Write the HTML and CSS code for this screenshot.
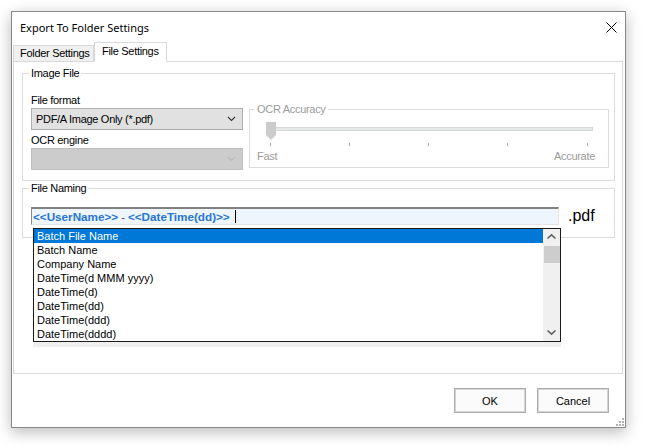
FILE: index.html
```html
<!DOCTYPE html>
<html>
<head>
<meta charset="utf-8">
<link rel="stylesheet" href="styles.css">
</head>
<body>
<div class="window">
  <div class="titlebar">
    <span class="title">Export To Folder Settings</span>
    <svg class="close" width="11" height="11" viewBox="0 0 11 11"><path d="M0.5 0.5 L10.5 10.5 M10.5 0.5 L0.5 10.5" stroke="#000" stroke-width="1" fill="none"/></svg>
  </div>
  <div class="tabs">
    <div class="tab">Folder Settings</div>
    <div class="tab active">File Settings</div>
  </div>
  <div class="panel">
    <fieldset class="group image-group">
      <legend class="legend-left">Image File</legend>
      <div class="image-row">
        <div class="left-col">
          <div class="label">File format</div>
          <div class="combo">
            <span class="combo-text">PDF/A Image Only (*.pdf)</span>
            <svg class="chev" width="9" height="6" viewBox="0 0 9 6"><polyline points="1,1 4.5,4.5 8,1" fill="none" stroke="#333" stroke-width="1.1"/></svg>
          </div>
          <div class="label label2">OCR engine</div>
          <div class="combo disabled">
            <span class="combo-text"></span>
            <svg class="chev" width="9" height="6" viewBox="0 0 9 6"><polyline points="1,1 4.5,4.5 8,1" fill="none" stroke="#b9b9b9" stroke-width="1.1"/></svg>
          </div>
        </div>
        <fieldset class="group ocr-group">
          <legend class="legend-ocr">OCR Accuracy</legend>
          <svg class="slider" width="350" height="26" viewBox="0 0 350 26">
            <rect x="12.5" y="7.5" width="325" height="3" fill="#e7eaea" stroke="#d6d6d6" stroke-width="1"/>
            <polygon points="11,2 21,2 21,15 16,20 11,15" fill="#cccccc"/>
            <rect x="15" y="23" width="1" height="3" fill="#a8a8a8"/>
            <rect x="94" y="23" width="1" height="3" fill="#a8a8a8"/>
            <rect x="173" y="23" width="1" height="3" fill="#a8a8a8"/>
            <rect x="252" y="23" width="1" height="3" fill="#a8a8a8"/>
            <rect x="332" y="23" width="1" height="3" fill="#a8a8a8"/>
          </svg>
          <div class="scale">
            <span>Fast</span>
            <span>Accurate</span>
          </div>
        </fieldset>
      </div>
    </fieldset>
    <fieldset class="group naming-group">
      <legend class="legend-left">File Naming</legend>
      <div class="naming-row">
        <div class="name-input">
          <span class="token">&lt;&lt;UserName&gt;&gt;</span><span class="sep"> - </span><span class="token">&lt;&lt;DateTime(dd)&gt;&gt;</span><span class="caret"></span>
        </div>
        <span class="ext">.pdf</span>
      </div>
    </fieldset>
    <div class="listbox">
      <ul class="items">
        <li class="selected">Batch File Name</li>
        <li>Batch Name</li>
        <li>Company Name</li>
        <li>DateTime(d MMM yyyy)</li>
        <li>DateTime(d)</li>
        <li>DateTime(dd)</li>
        <li>DateTime(ddd)</li>
        <li>DateTime(dddd)</li>
      </ul>
      <div class="scrollbar">
        <svg class="sb-arrow" width="17" height="17" viewBox="0 0 17 17"><polyline points="4.5,9.5 8.5,5.8 12.5,9.5" fill="none" stroke="#606060" stroke-width="1.6"/></svg>
        <div class="sb-thumb"></div>
        <div class="sb-track"></div>
        <svg class="sb-arrow" width="17" height="17" viewBox="0 0 17 17"><polyline points="4.5,6.5 8.5,10.2 12.5,6.5" fill="none" stroke="#606060" stroke-width="1.6"/></svg>
      </div>
    </div>
  </div>
  <div class="footer">
    <button class="btn">OK</button>
    <button class="btn">Cancel</button>
  </div>
  <svg class="grip" width="8" height="8" viewBox="0 0 8 8">
    <rect x="6" y="0" width="2" height="2" fill="#b4b4b4"/>
    <rect x="3" y="3" width="2" height="2" fill="#b4b4b4"/>
    <rect x="6" y="3" width="2" height="2" fill="#b4b4b4"/>
    <rect x="0" y="6" width="2" height="2" fill="#b4b4b4"/>
    <rect x="3" y="6" width="2" height="2" fill="#b4b4b4"/>
    <rect x="6" y="6" width="2" height="2" fill="#b4b4b4"/>
  </svg>
</div>
</body>
</html>
```

FILE: styles.css
```css
* { box-sizing: border-box; }

html, body {
  margin: 0;
  padding: 0;
  background: #ffffff;
}

body {
  width: 647px;
  height: 445px;
  overflow: hidden;
  font-family: "Liberation Sans", Arial, sans-serif;
  font-size: 11px;
  letter-spacing: -0.3px;
  color: #000;
}

.window {
  position: relative;
  margin: 11px 0 0 11px;
  width: 615px;
  height: 417px;
  border: 1px solid #888888;
  background: #ffffff;
  box-shadow: 0 4px 14px rgba(0, 0, 0, 0.28);
  display: flex;
  flex-direction: column;
}

.titlebar {
  height: 30px;
  flex: none;
  display: flex;
  align-items: center;
  padding-left: 8px;
  padding-right: 8px;
}

.title {
  font-family: "Noto Sans", "Open Sans", sans-serif;
  font-size: 11px;
  letter-spacing: 0;
  color: #000;
}

.close {
  margin-left: auto;
  display: block;
}

.tabs {
  height: 19px;
  flex: none;
  display: flex;
  align-items: flex-end;
  padding-left: 1px;
}

.tab {
  height: 16px;
  width: 81px;
  padding-left: 6px;
  line-height: 15px;
  background: #f0f0f0;
  border: 1px solid #d9d9d9;
  border-bottom: none;
  white-space: nowrap;
}

.tab.active {
  height: 20px;
  width: 73px;
  margin-bottom: -1px;
  padding-left: 7px;
  line-height: 17px;
  background: #ffffff;
  position: relative;
  z-index: 1;
}

.panel {
  position: relative;
  flex: none;
  margin-left: 1px;
  width: 610px;
  height: 313px;
  border: 1px solid #d9d9d9;
  padding: 0 7px 0 8px;
}

.group {
  margin: 0;
  min-width: 0;
  border: 1px solid #dcdcdc;
}

.group legend {
  padding: 0 2px;
  line-height: 13px;
  height: 13px;
}

.legend-left {
  margin-left: -2px;
}

.image-group {
  margin-top: 5px;
  padding: 14px 5px 10px 8px;
}

.image-row {
  display: flex;
  align-items: flex-start;
}

.left-col {
  width: 212px;
  flex: none;
}

.label {
  line-height: 13px;
  height: 13px;
  white-space: nowrap;
}

.label2 {
  margin-top: 4px;
}

.combo {
  margin-top: 1px;
  height: 22px;
  border: 1px solid #adadad;
  background: #e1e1e1;
  display: flex;
  align-items: center;
  padding-left: 4px;
  padding-right: 6px;
}

.combo-text {
  flex: 1;
  white-space: nowrap;
}

.combo.disabled {
  background: #cccccc;
  border-color: #bfbfbf;
}

.chev {
  display: block;
  flex: none;
}

.ocr-group {
  margin-top: 9px;
  margin-left: 6px;
  width: 360px;
  flex: none;
  padding: 4px 3px 4px 5px;
  color: #9b9b9b;
}

.slider {
  display: block;
}

.scale {
  margin-top: 4px;
  width: 350px;
  height: 13px;
  line-height: 13px;
  display: flex;
  justify-content: space-between;
  padding: 0 10px 0 2px;
}

.naming-group {
  margin-top: 1px;
  padding: 12px 5px 12px 8px;
}

.naming-row {
  display: flex;
  align-items: center;
}

.name-input {
  width: 528px;
  height: 18px;
  flex: none;
  background: #eef5fc;
  border: 1px solid;
  border-color: #808080 #e3e3e3 #e3e3e3 #8a8a8a;
  border-top-width: 2px;
  padding-left: 1px;
  display: flex;
  align-items: center;
  white-space: pre;
  letter-spacing: 0;
}

.token {
  font-weight: bold;
  font-size: 11.7px;
  color: #2777d2;
}

.sep {
  color: #444;
  font-size: 11px;
}

.caret {
  display: inline-block;
  width: 1px;
  height: 13px;
  background: #000;
  margin-left: 5px;
}

.ext {
  margin-left: 9px;
  font-size: 16px;
  letter-spacing: 0;
  line-height: 18px;
}

.listbox {
  position: absolute;
  left: 19px;
  top: 166px;
  width: 528px;
  height: 114px;
  border: 1px solid #1a1a1a;
  background: #ffffff;
  display: flex;
  box-shadow: 0 5px 0 #efefef;
  z-index: 2;
}

.items {
  list-style: none;
  margin: 0;
  padding: 0;
  flex: 1;
  letter-spacing: 0;
}

.items li {
  height: 14px;
  line-height: 14px;
  padding-left: 3px;
  white-space: nowrap;
}

.items li.selected {
  background: #0078d7;
  color: #ffffff;
}

.scrollbar {
  width: 17px;
  flex: none;
  background: #f0f0f0;
  display: flex;
  flex-direction: column;
}

.sb-arrow {
  display: block;
  flex: none;
}

.sb-thumb {
  height: 17px;
  margin: 0 0 0 1px;
  background: #cdcdcd;
  flex: none;
}

.sb-track {
  flex: 1;
}

.footer {
  flex: 1;
  display: flex;
  justify-content: flex-end;
  align-items: flex-start;
  gap: 11px;
  padding: 14px 16px 0 0;
}

.btn {
  width: 72px;
  height: 25px;
  margin: 0;
  padding: 0;
  font-family: "Liberation Sans", Arial, sans-serif;
  font-size: 11px;
  letter-spacing: 0;
  color: #000;
  background: #fbfbfb;
  border: 1px solid #adadad;
  box-shadow: inset 0 0 0 1px #d4d4d4;
}

.grip {
  position: absolute;
  right: 1px;
  bottom: 1px;
  display: block;
}
```
